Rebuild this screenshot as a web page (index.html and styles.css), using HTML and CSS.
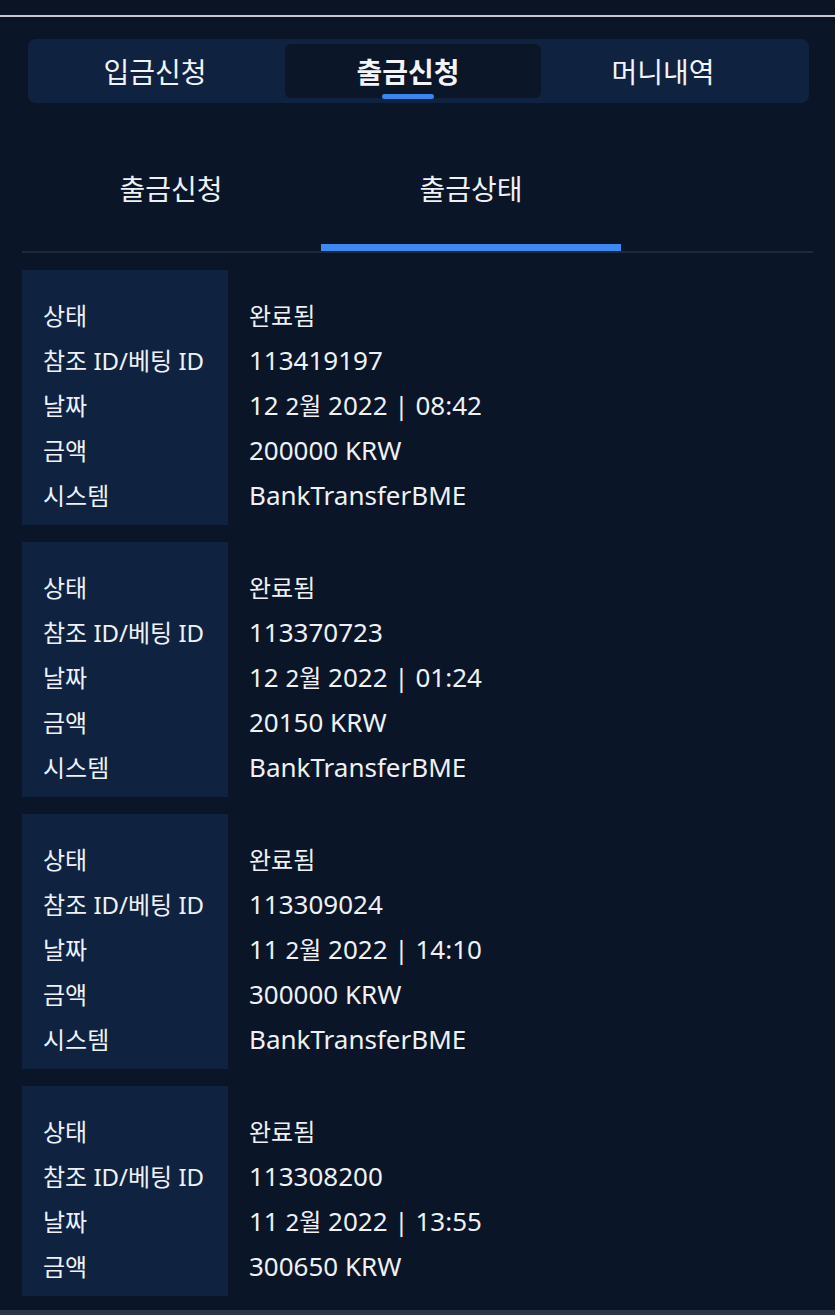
FILE: index.html
```html
<!DOCTYPE html>
<html lang="ko">
<head>
    <meta charset="UTF-8">
    <meta name="viewport" content="width=device-width, initial-scale=1.0">
    <title>출금상태</title>
    <link rel="stylesheet" href="styles.css">
</head>
<body>
    <div class="topbar"></div>
    <div class="page">
        <nav class="tabs">
            <a class="tab">입금신청</a>
            <a class="tab active">출금신청</a>
            <a class="tab">머니내역</a>
        </nav>

        <nav class="subtabs">
            <a class="subtab">출금신청</a>
            <a class="subtab active">출금상태</a>
        </nav>

        <div class="card">
            <div class="label">상태</div><div class="value ko">완료됨</div>
            <div class="label">참조 ID/베팅 ID</div><div class="value">113419197</div>
            <div class="label">날짜</div><div class="value">12&nbsp;<span class="ko">2월</span>&nbsp;2022 | 08:42</div>
            <div class="label">금액</div><div class="value">200000 KRW</div>
            <div class="label">시스템</div><div class="value">BankTransferBME</div>
        </div>

        <div class="card">
            <div class="label">상태</div><div class="value ko">완료됨</div>
            <div class="label">참조 ID/베팅 ID</div><div class="value">113370723</div>
            <div class="label">날짜</div><div class="value">12&nbsp;<span class="ko">2월</span>&nbsp;2022 | 01:24</div>
            <div class="label">금액</div><div class="value">20150 KRW</div>
            <div class="label">시스템</div><div class="value">BankTransferBME</div>
        </div>

        <div class="card">
            <div class="label">상태</div><div class="value ko">완료됨</div>
            <div class="label">참조 ID/베팅 ID</div><div class="value">113309024</div>
            <div class="label">날짜</div><div class="value">11&nbsp;<span class="ko">2월</span>&nbsp;2022 | 14:10</div>
            <div class="label">금액</div><div class="value">300000 KRW</div>
            <div class="label">시스템</div><div class="value">BankTransferBME</div>
        </div>

        <div class="card">
            <div class="label">상태</div><div class="value ko">완료됨</div>
            <div class="label">참조 ID/베팅 ID</div><div class="value">113308200</div>
            <div class="label">날짜</div><div class="value">11&nbsp;<span class="ko">2월</span>&nbsp;2022 | 13:55</div>
            <div class="label">금액</div><div class="value">300650 KRW</div>
        </div>
    </div>
    <div class="bottombar"></div>
</body>
</html>
```

FILE: styles.css
```css
* {
    box-sizing: border-box;
    margin: 0;
    padding: 0;
}

html, body {
    height: 100%;
}

body {
    font-family: "Noto Sans", "Noto Sans CJK KR", sans-serif;
    color: #eef1f5;
    background-color: #0a1628;
    display: flex;
    flex-direction: column;
    overflow: hidden;
}

.topbar {
    height: 17px;
    flex: none;
    background-color: #0a1424;
    border-bottom: 2px solid #c5c9cf;
}

.page {
    flex: 1;
    padding: 0 22px;
}

.bottombar {
    height: 5px;
    flex: none;
    background-color: #2b3747;
}

/* 상단 탭 */
.tabs {
    display: grid;
    grid-template-columns: repeat(3, 1fr);
    margin: 22px 4px 0 6px;
    padding: 5px 19px 5px 0;
    height: 64px;
    background-color: #0f2341;
    border-radius: 8px;
}

.tab {
    position: relative;
    display: flex;
    align-items: center;
    justify-content: center;
    font-family: "Noto Sans CJK KR", sans-serif;
    font-size: 28px;
    color: #f2f4f7;
    border-radius: 6px;
    cursor: pointer;
}

.tab.active {
    margin: 0 -5px 0 3px;
    padding-right: 10px;
    background-color: #0b1629;
    font-weight: 700;
}

.tab.active::after {
    content: '';
    position: absolute;
    left: 50%;
    bottom: -1px;
    width: 52px;
    height: 5px;
    margin-left: -31px;
    border-radius: 3px;
    background-color: #3a86ef;
}

/* 하위 탭 */
.subtabs {
    display: flex;
    margin-top: 29px;
    border-bottom: 2px solid #1d2a3c;
}

.subtab {
    width: 300px;
    height: 119px;
    display: flex;
    align-items: center;
    justify-content: center;
    font-family: "Noto Sans CJK KR", sans-serif;
    font-size: 28px;
    color: #eef1f5;
    border-bottom: 7px solid transparent;
    cursor: pointer;
}

.subtab:first-child {
    margin-left: -1px;
}

.subtab.active {
    border-bottom-color: #3d8af2;
}

/* 출금 내역 카드 */
.card {
    display: grid;
    grid-template-columns: 206px 1fr;
    grid-auto-rows: 45px;
    margin-top: 17px;
    padding: 22px 0 8px;
    background: linear-gradient(to right, #0f2341 206px, transparent 206px);
    font-size: 24px;
}

.label,
.value {
    display: flex;
    align-items: center;
    white-space: pre;
}

.label {
    padding-left: 21px;
}

.value {
    padding-left: 21px;
    font-size: 26px;
}

.value.ko,
.value .ko {
    font-size: 24px;
}
```
